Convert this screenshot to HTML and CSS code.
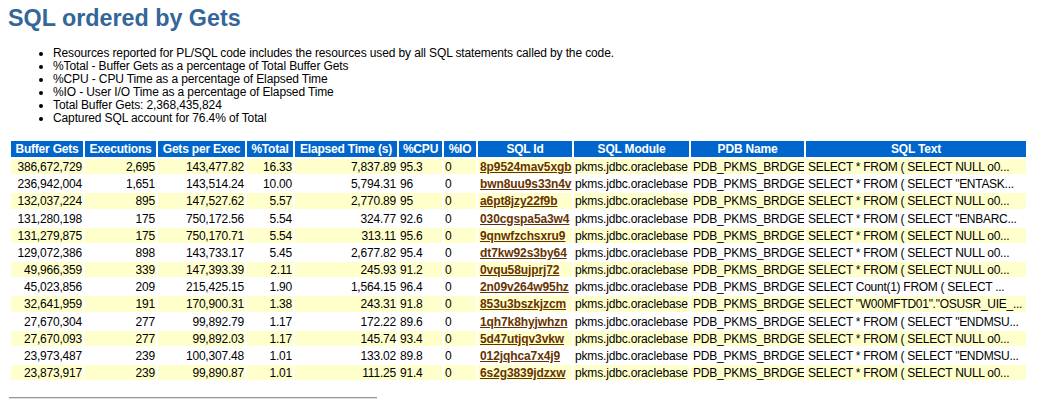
FILE: index.html
```html
<!DOCTYPE html>
<html>
<head>
<meta charset="utf-8">
<title>SQL ordered by Gets</title>
<link rel="stylesheet" href="styles.css">
</head>
<body>
<h3 class="title">SQL ordered by Gets</h3>
<ul class="notes">
<li>Resources reported for PL/SQL code includes the resources used by all SQL statements called by the code.</li>
<li>%Total - Buffer Gets as a percentage of Total Buffer Gets</li>
<li>%CPU - CPU Time as a percentage of Elapsed Time</li>
<li>%IO - User I/O Time as a percentage of Elapsed Time</li>
<li>Total Buffer Gets: 2,368,435,824</li>
<li>Captured SQL account for 76.4% of Total</li>
</ul>
<table class="report">
<tr><th>Buffer Gets</th><th>Executions</th><th>Gets per Exec</th><th>%Total</th><th>Elapsed Time (s)</th><th>%CPU</th><th>%IO</th><th>SQL Id</th><th>SQL Module</th><th>PDB Name</th><th>SQL Text</th></tr>
<tr class="odd"><td class="r">386,672,729</td><td class="r">2,695</td><td class="r">143,477.82</td><td class="r">16.33</td><td class="r">7,837.89</td><td>95.3</td><td>0</td><td class="id"><a href="#">8p9524mav5xgb</a></td><td>pkms.jdbc.oraclebase</td><td>PDB_PKMS_BRDGE</td><td>SELECT * FROM ( SELECT NULL o0...</td></tr>
<tr><td class="r">236,942,004</td><td class="r">1,651</td><td class="r">143,514.24</td><td class="r">10.00</td><td class="r">5,794.31</td><td>96</td><td>0</td><td class="id"><a href="#">bwn8uu9s33n4v</a></td><td>pkms.jdbc.oraclebase</td><td>PDB_PKMS_BRDGE</td><td>SELECT * FROM ( SELECT "ENTASK...</td></tr>
<tr class="odd"><td class="r">132,037,224</td><td class="r">895</td><td class="r">147,527.62</td><td class="r">5.57</td><td class="r">2,770.89</td><td>95</td><td>0</td><td class="id"><a href="#">a6pt8jzy22f9b</a></td><td>pkms.jdbc.oraclebase</td><td>PDB_PKMS_BRDGE</td><td>SELECT * FROM ( SELECT NULL o0...</td></tr>
<tr><td class="r">131,280,198</td><td class="r">175</td><td class="r">750,172.56</td><td class="r">5.54</td><td class="r">324.77</td><td>92.6</td><td>0</td><td class="id"><a href="#">030cgspa5a3w4</a></td><td>pkms.jdbc.oraclebase</td><td>PDB_PKMS_BRDGE</td><td>SELECT * FROM ( SELECT "ENBARC...</td></tr>
<tr class="odd"><td class="r">131,279,875</td><td class="r">175</td><td class="r">750,170.71</td><td class="r">5.54</td><td class="r">313.11</td><td>95.6</td><td>0</td><td class="id"><a href="#">9qnwfzchsxru9</a></td><td>pkms.jdbc.oraclebase</td><td>PDB_PKMS_BRDGE</td><td>SELECT * FROM ( SELECT NULL o0...</td></tr>
<tr><td class="r">129,072,386</td><td class="r">898</td><td class="r">143,733.17</td><td class="r">5.45</td><td class="r">2,677.82</td><td>95.4</td><td>0</td><td class="id"><a href="#">dt7kw92s3by64</a></td><td>pkms.jdbc.oraclebase</td><td>PDB_PKMS_BRDGE</td><td>SELECT * FROM ( SELECT NULL o0...</td></tr>
<tr class="odd"><td class="r">49,966,359</td><td class="r">339</td><td class="r">147,393.39</td><td class="r">2.11</td><td class="r">245.93</td><td>91.2</td><td>0</td><td class="id"><a href="#">0vqu58ujprj72</a></td><td>pkms.jdbc.oraclebase</td><td>PDB_PKMS_BRDGE</td><td>SELECT * FROM ( SELECT NULL o0...</td></tr>
<tr><td class="r">45,023,856</td><td class="r">209</td><td class="r">215,425.15</td><td class="r">1.90</td><td class="r">1,564.15</td><td>96.4</td><td>0</td><td class="id"><a href="#">2n09v264w95hz</a></td><td>pkms.jdbc.oraclebase</td><td>PDB_PKMS_BRDGE</td><td>SELECT Count(1) FROM ( SELECT ...</td></tr>
<tr class="odd"><td class="r">32,641,959</td><td class="r">191</td><td class="r">170,900.31</td><td class="r">1.38</td><td class="r">243.31</td><td>91.8</td><td>0</td><td class="id"><a href="#">853u3bszkjzcm</a></td><td>pkms.jdbc.oraclebase</td><td>PDB_PKMS_BRDGE</td><td>SELECT "W00MFTD01"."OSUSR_UIE_...</td></tr>
<tr><td class="r">27,670,304</td><td class="r">277</td><td class="r">99,892.79</td><td class="r">1.17</td><td class="r">172.22</td><td>89.6</td><td>0</td><td class="id"><a href="#">1qh7k8hyjwhzn</a></td><td>pkms.jdbc.oraclebase</td><td>PDB_PKMS_BRDGE</td><td>SELECT * FROM ( SELECT "ENDMSU...</td></tr>
<tr class="odd"><td class="r">27,670,093</td><td class="r">277</td><td class="r">99,892.03</td><td class="r">1.17</td><td class="r">145.74</td><td>93.4</td><td>0</td><td class="id"><a href="#">5d47utjqv3vkw</a></td><td>pkms.jdbc.oraclebase</td><td>PDB_PKMS_BRDGE</td><td>SELECT * FROM ( SELECT NULL o0...</td></tr>
<tr><td class="r">23,973,487</td><td class="r">239</td><td class="r">100,307.48</td><td class="r">1.01</td><td class="r">133.02</td><td>89.8</td><td>0</td><td class="id"><a href="#">012jqhca7x4j9</a></td><td>pkms.jdbc.oraclebase</td><td>PDB_PKMS_BRDGE</td><td>SELECT * FROM ( SELECT "ENDMSU...</td></tr>
<tr class="odd"><td class="r">23,873,917</td><td class="r">239</td><td class="r">99,890.87</td><td class="r">1.01</td><td class="r">111.25</td><td>91.4</td><td>0</td><td class="id"><a href="#">6s2g3839jdzxw</a></td><td>pkms.jdbc.oraclebase</td><td>PDB_PKMS_BRDGE</td><td>SELECT * FROM ( SELECT NULL o0...</td></tr>
</table>
<hr class="rule">
</body>
</html>
```
FILE: styles.css
```css
html, body { background: #fff; }
body { margin: 8px; font-family: "Liberation Sans", Arial, sans-serif; font-size: 12px; color: #000; overflow: hidden; }
.title { margin: 0 0 19px; font-size: 23.3px; font-weight: bold; color: #336699; line-height: 20px; }
.notes { margin: 0 0 14px; padding-left: 45px; font-size: 12px; letter-spacing: -0.12px; line-height: 13px; }
.report { border-collapse: separate; border-spacing: 2px; margin-left: 1px; font-size: 12px; letter-spacing: -0.2px; table-layout: fixed; width: 1019px; }
.report th { background: #0066cc; color: #fff; font-weight: bold; padding: 0 1px; height: 16px; line-height: 16px; white-space: nowrap; box-sizing: border-box; }
.report td { padding: 1px 1px 0; height: 15.17px; line-height: 14.17px; white-space: nowrap; background: #fff; box-sizing: border-box; overflow: hidden; }
.report tr.odd td { background: #ffffcc; }
.report td.r { text-align: right; }
.report td.id a { color: #663300; font-weight: bold; letter-spacing: -0.1px; }
.report th:nth-child(1) { width: 72px; }
.report th:nth-child(2) { width: 71px; }
.report th:nth-child(3) { width: 87px; }
.report th:nth-child(4) { width: 46px; }
.report th:nth-child(5) { width: 102px; }
.report th:nth-child(6) { width: 43px; }
.report th:nth-child(7) { width: 32px; }
.report th:nth-child(8) { width: 94px; }
.report th:nth-child(9) { width: 115px; }
.report th:nth-child(10) { width: 113px; }
.report th:nth-child(11) { width: 220px; }
.report td:nth-child(8), .report td:nth-child(10), .report td:nth-child(11) { padding-left: 2px; }
.report td:nth-child(9) { letter-spacing: -0.165px; }
.report td:nth-child(11) { letter-spacing: -0.28px; }
.rule { width: 368px; margin: 15px 0 0 1px; border: 0; border-top: 1px solid #999; border-bottom: 1px solid #ddd; }
```
